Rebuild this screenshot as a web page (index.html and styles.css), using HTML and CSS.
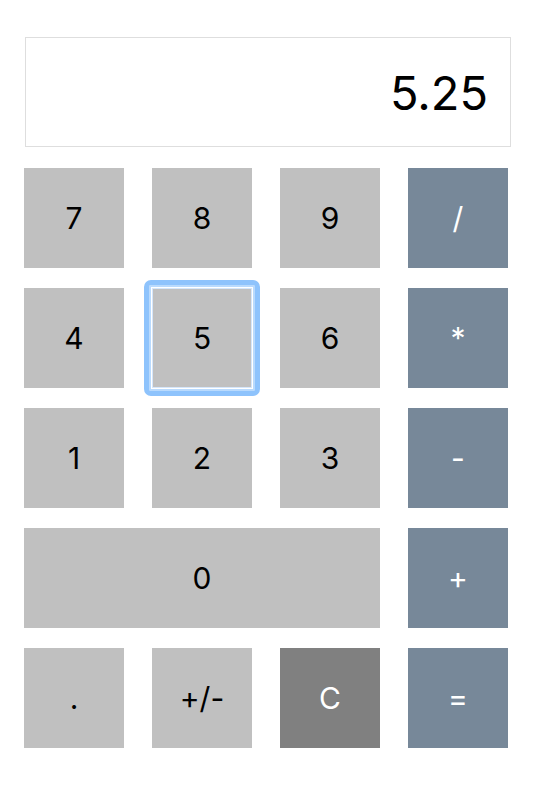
FILE: index.html
```html
<!DOCTYPE html>
<html>
<head>
<meta charset="utf-8">
<link rel="stylesheet" href="styles.css">
</head>
<body>
<div class="calc">
  <div class="display">5.25</div>
  <div class="keys">
    <button class="key">7</button>
    <button class="key">8</button>
    <button class="key">9</button>
    <button class="key op">/</button>
    <button class="key">4</button>
    <button class="key focused">5</button>
    <button class="key">6</button>
    <button class="key op">*</button>
    <button class="key">1</button>
    <button class="key">2</button>
    <button class="key">3</button>
    <button class="key op">-</button>
    <button class="key zero">0</button>
    <button class="key op">+</button>
    <button class="key">.</button>
    <button class="key">+/-</button>
    <button class="key clear">C</button>
    <button class="key op">=</button>
  </div>
</div>
</body>
</html>
```
FILE: styles.css
```css
html, body {
  margin: 0;
  padding: 0;
  background: #fff;
}
body {
  font-family: Inter, "Liberation Sans", Arial, sans-serif;
}
.calc {
  padding: 37px 0 0 24px;
  width: 488px;
}
.display {
  margin-left: 1px;
  width: 486px;
  height: 110px;
  box-sizing: border-box;
  border: 1px solid #dedede;
  display: flex;
  align-items: center;
  justify-content: flex-end;
  padding-right: 22px;
  font-size: 47px;
  color: #000;
}
.keys {
  margin-top: 21px;
  display: grid;
  grid-template-columns: repeat(4, 100px);
  grid-auto-rows: 100px;
  column-gap: 28px;
  row-gap: 20px;
}
.key {
  position: relative;
  border: none;
  margin: 0;
  padding: 0;
  background: #c0c0c0;
  color: #000;
  font-family: Inter, "Liberation Sans", Arial, sans-serif;
  font-size: 30px;
  display: flex;
  align-items: center;
  justify-content: center;
}
.key.op {
  background: #778899;
  color: #fff;
}
.key.clear {
  background: #808080;
  color: #fff;
}
.key.zero {
  grid-column: span 3;
}
.key.focused {
  box-shadow: inset 0 0 0 1px #d5e6fa;
}
.key.focused::after {
  content: "";
  position: absolute;
  inset: -8px;
  border: 5px solid #8ec3fc;
  border-radius: 7px;
  box-shadow: inset 0 0 0 2px #b9dafd;
}
```
